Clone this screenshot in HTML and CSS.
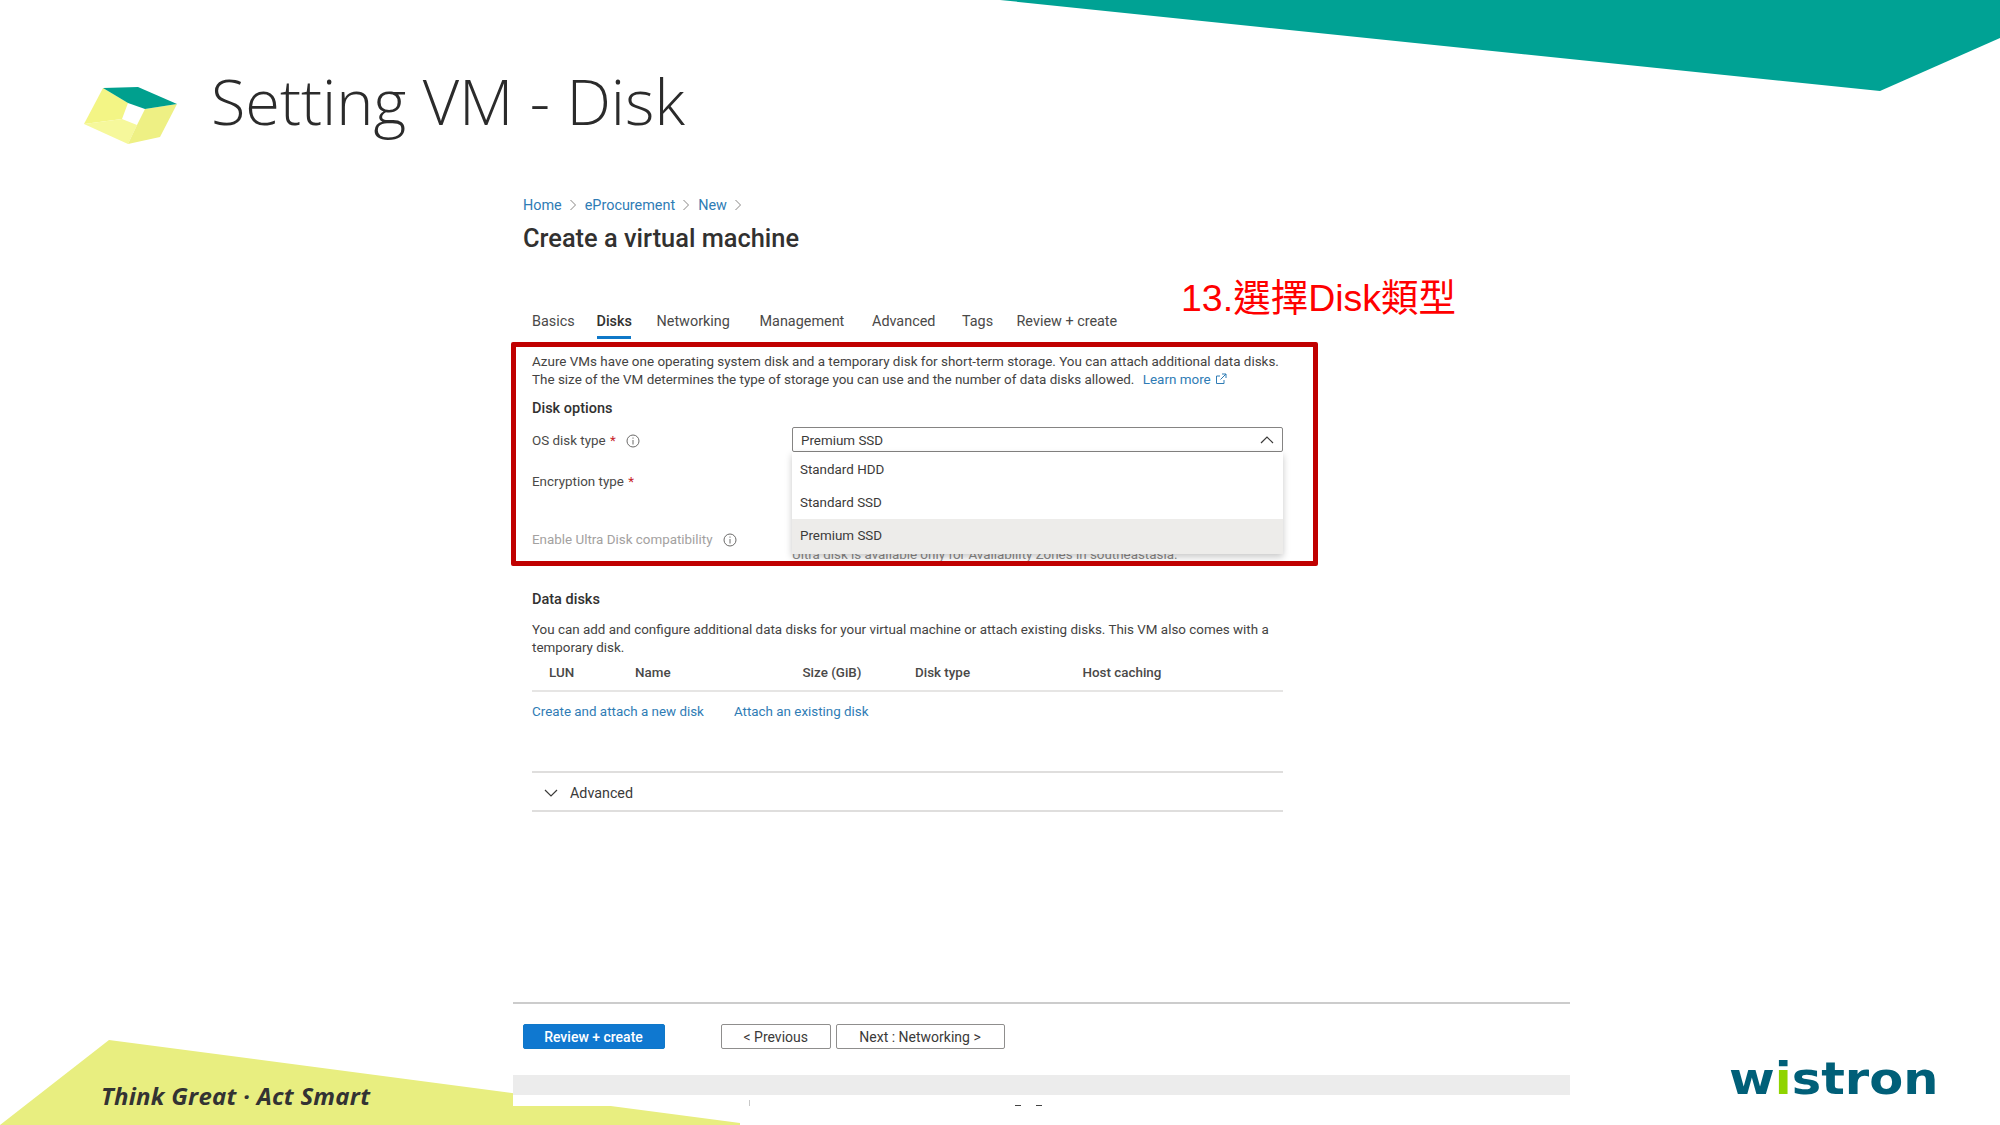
FILE: index.html
```html
<!DOCTYPE html>
<html lang="en">
<head>
  <meta charset="UTF-8">
  <title>Setting VM - Disk</title>
  <link rel="stylesheet" href="styles.css">
</head>
<body>
<div class="slide">
  <svg class="backdrop" viewBox="0 0 2000 1125" width="2000" height="1125">
    <polygon points="1000,0 2000,0 2000,38 1880,91" fill="#00a294"/>
    <polygon points="109,1040 740,1123 740,1125 0,1125" fill="#e8ee80"/>
  </svg>

  <div class="slide-head">
    <svg class="cube" viewBox="84 87 93 58" width="93" height="58">
      <polygon points="103,88 128,103 122,119 84,124" fill="#f3f585"/>
      <polygon points="84,124 122,119 137,125 128,144" fill="#f6f89b"/>
      <polygon points="145,109 177,104 160,137 128,144 137,125" fill="#eef084"/>
      <polygon points="103,88 138,87 177,104 145,109 128,103" fill="#00a08e"/>
    </svg>
    <h1 class="slide-title">Setting VM - Disk</h1>
  </div>

  <div class="portal">
    <div class="crumbs">
      <a>Home</a><svg class="crumb-sep" viewBox="0 0 8 12" width="8" height="12"><path d="M1.5 1l5 5-5 5" /></svg>
      <a>eProcurement</a><svg class="crumb-sep" viewBox="0 0 8 12" width="8" height="12"><path d="M1.5 1l5 5-5 5" /></svg>
      <a>New</a><svg class="crumb-sep" viewBox="0 0 8 12" width="8" height="12"><path d="M1.5 1l5 5-5 5" /></svg>
    </div>
    <h2 class="page-title">Create a virtual machine</h2>

    <div class="tabs">
      <span class="tab tab-basics">Basics</span>
      <span class="tab tab-disks active">Disks</span>
      <span class="tab tab-net">Networking</span>
      <span class="tab tab-mgmt">Management</span>
      <span class="tab tab-adv">Advanced</span>
      <span class="tab tab-tags">Tags</span>
      <span class="tab">Review + create</span>
    </div>

    <div class="form">
      <p class="desc desc-top">Azure VMs have one operating system disk and a temporary disk for short-term storage. You can attach additional data disks.<br>The size of the VM determines the type of storage you can use and the number of data disks allowed. <a class="learn">Learn more</a>
        <svg class="ext" viewBox="0 0 12 12" width="12" height="12"><path d="M5 3H1.500v7.500H9V7M7 1h4v4M11 1L5.500 6.500"/></svg></p>

      <h3 class="section">Disk options</h3>

      <div class="row row-os">
        <div class="label">OS disk type <span class="req">*</span>
          <svg class="info" viewBox="0 0 14 14" width="14" height="14"><circle cx="7" cy="7" r="6"/><path d="M7 6v4.500M7 3.500v1.200"/></svg>
        </div>
        <div class="select">
          <span class="select-value">Premium SSD</span>
          <svg class="chev" viewBox="0 0 14 8" width="14" height="8"><path d="M1 7l6-6 6 6"/></svg>
          <div class="menu">
            <div class="opt opt-first">Standard HDD</div>
            <div class="opt">Standard SSD</div>
            <div class="opt opt-on">Premium SSD</div>
          </div>
        </div>
      </div>

      <div class="row row-enc">
        <div class="label">Encryption type <span class="req">*</span></div>
      </div>

      <div class="row row-ultra">
        <div class="label label-off">Enable Ultra Disk compatibility
          <svg class="info" viewBox="0 0 14 14" width="14" height="14"><circle cx="7" cy="7" r="6"/><path d="M7 6v4.500M7 3.500v1.200"/></svg>
        </div>
        <div class="hint">Ultra disk is available only for Availability Zones in southeastasia.</div>
      </div>

      <h3 class="section section-data">Data disks</h3>
      <p class="desc desc-data">You can add and configure additional data disks for your virtual machine or attach existing disks. This VM also comes with a temporary disk.</p>

      <div class="disk-head">
        <span class="col-lun">LUN</span>
        <span class="col-name">Name</span>
        <span class="col-size">Size (GiB)</span>
        <span class="col-type">Disk type</span>
        <span>Host caching</span>
      </div>

      <div class="disk-links">
        <a>Create and attach a new disk</a>
        <a>Attach an existing disk</a>
      </div>

      <div class="advanced">
        <svg class="chev" viewBox="0 0 14 8" width="14" height="8"><path d="M1 1l6 6 6-6"/></svg>
        <span>Advanced</span>
      </div>
    </div>

    <div class="foot">
      <div class="actions">
        <button class="btn btn-primary">Review + create</button>
        <button class="btn btn-prev">&lt; Previous</button>
        <button class="btn btn-next">Next : Networking &gt;</button>
      </div>
      <div class="band"></div>
      <div class="tail"><i class="tick"></i><i class="dash"></i><i class="dash"></i></div>
    </div>

    <div class="callout"></div>
  </div>

  <div class="note">13.選擇Disk類型</div>
  <div class="slogan">Think Great · Act Smart</div>
  <div class="logo">w<span class="logo-i">i</span>stron</div>
</div>
</body>
</html>
```

FILE: styles.css
```css
* {
  box-sizing: border-box;
}

body {
  margin: 0;
  background-color: #ffffff;
}

.slide {
  position: relative;
  width: 2000px;
  height: 1125px;
  overflow: hidden;
  background-color: #ffffff;
  font-family: "Open Sans", "Noto Sans", sans-serif;
}

.backdrop {
  position: absolute;
  left: 0;
  top: 0;
}

/* slide title */
.slide-head {
  position: relative;
  display: flex;
  align-items: flex-start;
  gap: 34px;
  padding: 65px 0 0 84px;
}

.cube {
  margin-top: 22px;
}

.slide-title {
  margin: 0;
  font-size: 63px;
  font-weight: 350;
  line-height: 72px;
  color: #2b2b2b;
}

/* the pasted portal screen */
.portal {
  position: absolute;
  left: 513px;
  top: 190px;
  width: 1057px;
  height: 916px;
  display: flex;
  flex-direction: column;
  background-color: #ffffff;
  font-family: "Roboto", "Noto Sans", sans-serif;
  font-size: 13.400px;
  color: #3b3a39;
}

.portal a {
  color: #2f7cb5;
}

.crumbs {
  display: flex;
  align-items: center;
  height: 30px;
  padding-left: 10px;
  font-size: 14.400px;
}

.crumb-sep {
  margin: 0 8px 0 7px;
  fill: none;
  stroke: #8a8886;
  stroke-width: 1;
}

.page-title {
  margin: 0;
  padding-left: 10px;
  height: 38px;
  font-size: 25.400px;
  font-weight: 500;
  line-height: 37px;
  color: #323130;
}

.tabs {
  display: flex;
  height: 34px;
  margin-top: 47px;
  padding-left: 19px;
  font-size: 14.400px;
}

.tab {
  line-height: 33px;
  white-space: nowrap;
  color: #4a4948;
}

.tab-basics { width: 64.500px; }
.tab-disks { width: 34.500px; margin-right: 25.500px; }
.tab-net { width: 103px; }
.tab-mgmt { width: 112.500px; }
.tab-adv { width: 90px; }
.tab-tags { width: 54.500px; }

.tab.active {
  color: #323130;
  font-weight: 500;
  box-shadow: inset 0 -3px 0 #0f78c8;
}

.form {
  width: 770px;
  padding-left: 19px;
}

.desc {
  margin: 0;
  line-height: 18px;
  color: #444342;
}

.desc-top {
  margin-top: 14px;
  font-size: 13.450px;
  white-space: nowrap;
}

.learn {
  margin-left: 5px;
}

.ext {
  margin-left: 1px;
  vertical-align: -1px;
  fill: none;
  stroke: #2f7cb5;
  stroke-width: 1;
}

.section {
  margin: 8px 0 0;
  font-size: 14.500px;
  font-weight: 500;
  line-height: 24px;
  color: #323130;
}

.row {
  display: flex;
}

.row-os {
  margin-top: 6px;
  align-items: flex-start;
}

.row-os .label {
  height: 25px;
  line-height: 27px;
}

.row-enc {
  margin-top: 17px;
}

.row-ultra {
  margin-top: 32px;
  height: 36px;
}

.label {
  width: 260px;
  line-height: 26px;
  white-space: nowrap;
  color: #4a4948;
}

.label-off {
  color: #a3a1a0;
}

.req {
  color: #c8242b;
  margin-left: 1px;
}

.info {
  margin-left: 7px;
  vertical-align: -3px;
  fill: none;
  stroke: #6b6a69;
  stroke-width: 1;
}

.select {
  position: relative;
  display: flex;
  align-items: center;
  justify-content: space-between;
  width: 491px;
  height: 25px;
  padding: 0 8px;
  border: 1px solid #858483;
  border-radius: 2px;
}

.select-value {
  padding-top: 2px;
}

.chev {
  fill: none;
  stroke: #3b3a39;
  stroke-width: 1.200;
}

.menu {
  position: absolute;
  left: -1px;
  right: -1px;
  top: 24px;
  z-index: 2;
  background-color: #ffffff;
  box-shadow: 0 3px 7px rgba(0, 0, 0, .22);
}

.opt {
  height: 33.500px;
  padding-left: 8px;
  line-height: 34px;
}

.opt-first {
  line-height: 36px;
}

.opt-on {
  height: 34.500px;
  background-color: #edecea;
}

.hint {
  padding-top: 20px;
  line-height: 16px;
  white-space: nowrap;
  color: #8a8886;
}

.section-data {
  margin-top: 25px;
}

.desc-data {
  margin-top: 9px;
  width: 751px;
}

.disk-head {
  display: flex;
  width: 751px;
  height: 35px;
  padding-left: 17px;
  line-height: 32px;
  font-weight: 500;
  border-bottom: 2px solid #e6e5e4;
  color: #4a4948;
}

.col-lun { width: 86px; }
.col-name { width: 167.500px; }
.col-size { width: 112.500px; }
.col-type { width: 167.500px; }

.disk-links {
  display: flex;
  gap: 30px;
  margin-top: 8px;
  line-height: 24px;
}

.advanced {
  display: flex;
  align-items: center;
  gap: 12px;
  width: 751px;
  height: 41px;
  margin-top: 47px;
  padding: 2px 0 0 12px;
  border-top: 2px solid #dfdedd;
  border-bottom: 2px solid #dfdedd;
  font-size: 14.300px;
}

.foot {
  margin-top: auto;
  border-top: 2px solid #cccccc;
}

.actions {
  display: flex;
  padding: 20px 0 0 9.500px;
}

.btn {
  height: 25px;
  padding: 0;
  border: 1px solid #8f8e8d;
  border-radius: 2px;
  background-color: #ffffff;
  font-family: inherit;
  font-size: 14px;
  color: #3b3a39;
}

.btn-primary {
  width: 142px;
  margin-right: 56px;
  border-color: #0f78c8;
  background-color: #0f78d0;
  color: #ffffff;
  font-weight: 500;
}

.btn-prev {
  width: 110.500px;
  margin-right: 4.500px;
}

.btn-next {
  width: 169px;
}

.band {
  height: 20px;
  margin-top: 26px;
  background-color: #ececec;
}

.tail {
  display: flex;
  align-items: flex-end;
  height: 11px;
}

.tick {
  width: 1px;
  height: 6px;
  margin-left: 236px;
  background-color: #c8c8c8;
}

.dash {
  width: 6px;
  height: 1px;
  margin-left: 15px;
  background-color: #444444;
}

.tick + .dash {
  margin-left: 265px;
}

/* red box around the step */
.callout {
  position: absolute;
  left: -2px;
  top: 152px;
  width: 807px;
  height: 224px;
  z-index: 3;
  border: 5px solid #c00000;
  border-radius: 2px;
}

.note {
  position: absolute;
  left: 1181px;
  top: 276px;
  font-family: "Liberation Sans", "Noto Sans CJK TC", sans-serif;
  font-size: 37.500px;
  line-height: 44px;
  color: #ff0000;
}

.slogan {
  position: absolute;
  left: 101px;
  top: 1080px;
  font-family: "Open Sans", sans-serif;
  font-size: 24px;
  font-style: italic;
  font-weight: 700;
  line-height: 32px;
  letter-spacing: .25px;
  color: #333333;
}

.logo {
  position: absolute;
  left: 1729px;
  top: 1053px;
  font-family: "DejaVu Sans", sans-serif;
  font-size: 45px;
  font-weight: 700;
  line-height: 52px;
  color: #005f78;
  transform: scaleX(1.1);
  transform-origin: left center;
}

.logo-i {
  background: linear-gradient(#005f78 0 33%, #8fd400 33%);
  -webkit-background-clip: text;
  background-clip: text;
  color: transparent;
}
```
